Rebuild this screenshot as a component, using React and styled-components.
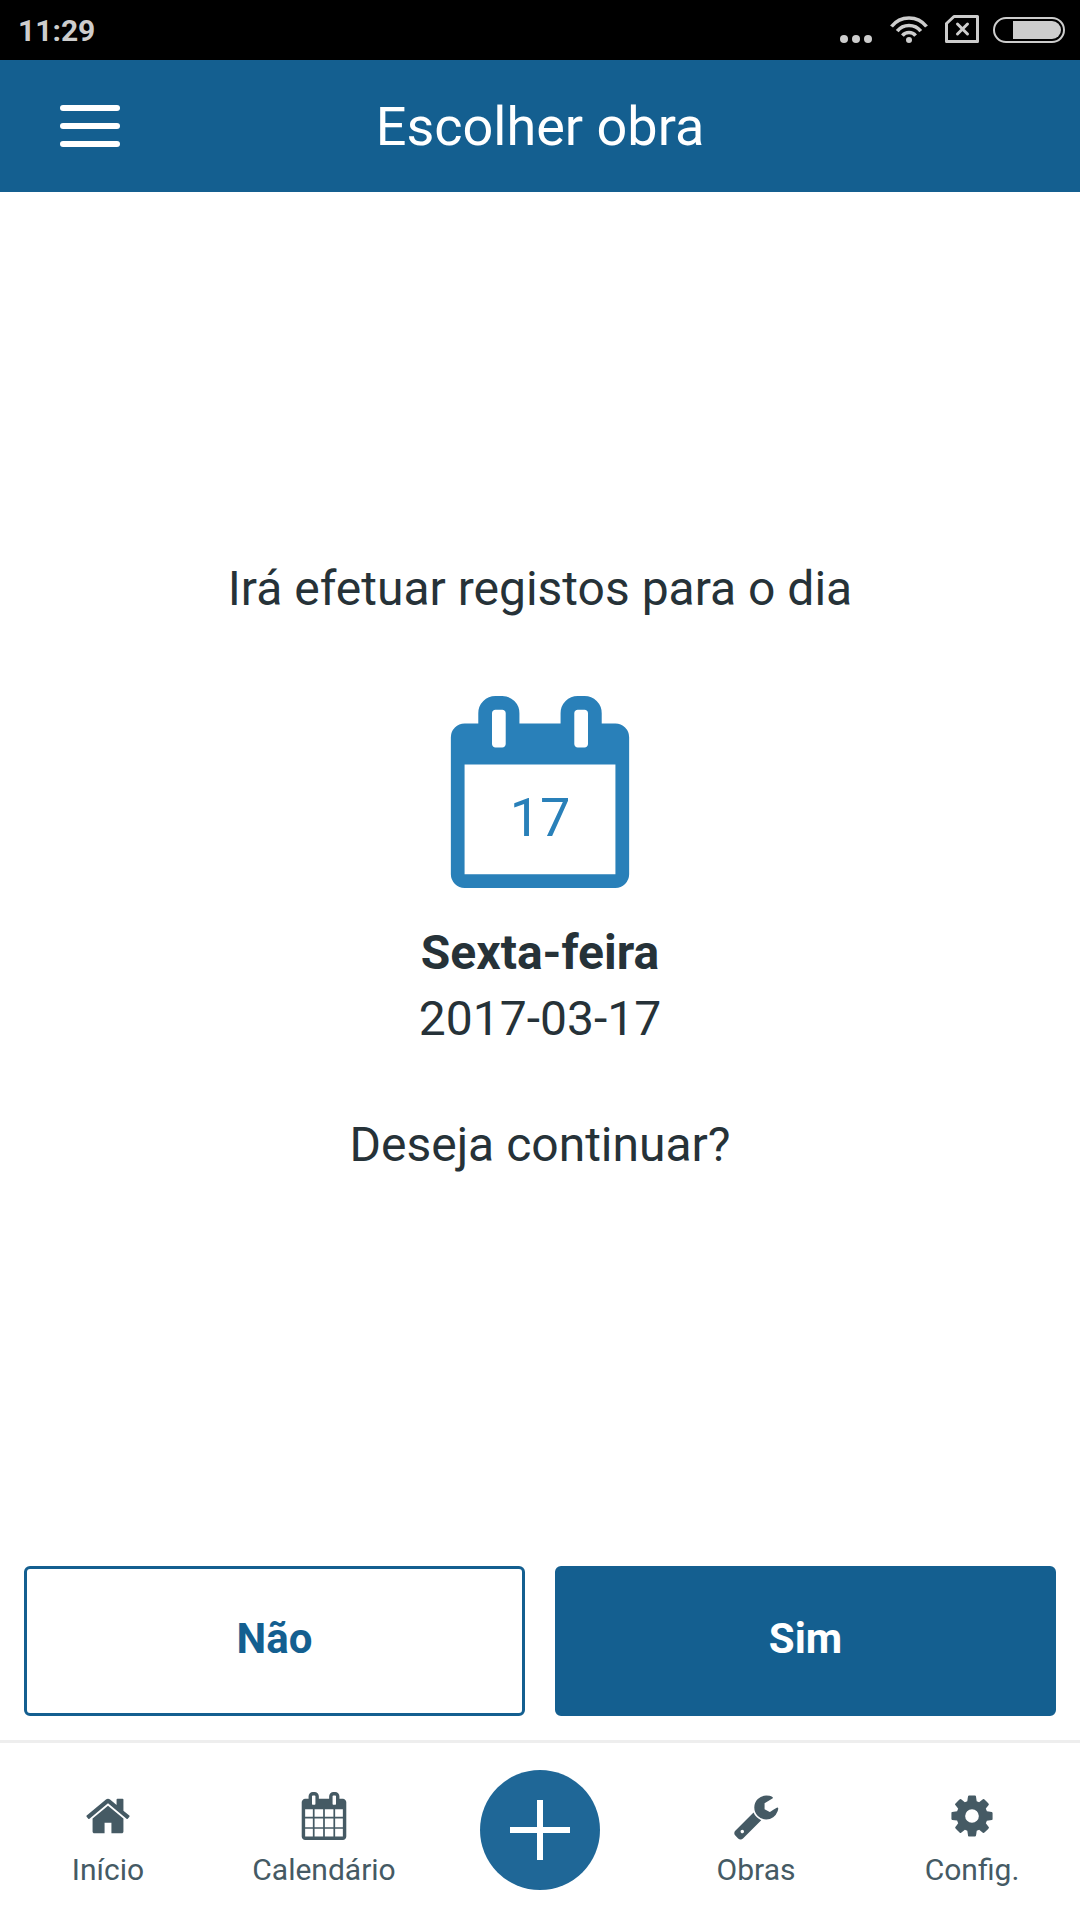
import React from 'react'
import styled, { createGlobalStyle } from 'styled-components'

const colors = {
  primary: '#145f90',
  primaryLight: '#1f6797',
  accent: '#2980b9',
  text: '#263238',
  muted: '#455a64',
  border: '#eeeeee',
  status: '#cdcdcd',
}

const GlobalStyle = createGlobalStyle`
  * {
    box-sizing: border-box;
  }

  body {
    margin: 0;
    background: #fff;
    color: ${ colors.text };
    font-family: Roboto, sans-serif;
  }

  button {
    font-family: inherit;
    cursor: pointer;
  }

  svg {
    display: block;
  }
`

const Screen = styled.div`
  display: flex;
  flex-direction: column;
  min-height: 100vh;
`

const StatusBar = styled.div`
  display: flex;
  align-items: center;
  justify-content: space-between;
  height: 60px;
  padding: 0 15px 0 18px;
  background: #000;
  color: ${ colors.status };
  font-size: 30px;
  font-weight: 700;
`

const StatusIcons = styled.div`
  display: flex;
  gap: 14px;
`

const Header = styled.header`
  display: grid;
  grid-template-columns: 1fr auto 1fr;
  align-items: center;
  height: 132px;
  padding: 0 60px;
  background: ${ colors.primary };
  color: #fff;
`

const MenuButton = styled.button`
  display: flex;
  flex-direction: column;
  gap: 12px;
  width: 60px;
  padding: 0;
  border: 0;
  background: none;
`

const MenuBar = styled.span`
  height: 6px;
  border-radius: 3px;
  background: #fff;
`

const Title = styled.h1`
  margin: 0;
  font-size: 54px;
  font-weight: 400;
`

const Main = styled.main`
  display: flex;
  flex: 1;
  flex-direction: column;
  align-items: center;
  justify-content: center;
  font-size: 48px;
  line-height: 66px;
  text-align: center;
`

const Message = styled.p`
  margin: 0;
`

const DateBlock = styled.div`
  display: flex;
  flex-direction: column;
  align-items: center;
  margin: 74px 0 60px;
`

const CalendarDay = styled.div`
  position: relative;
  margin-bottom: 32px;
  color: ${ colors.accent };
`

const DayNumber = styled.span`
  position: absolute;
  inset: 0;
  display: flex;
  align-items: center;
  justify-content: center;
  padding-top: 52px;
  font-size: 54px;
`

const Actions = styled.div`
  display: flex;
  gap: 30px;
  padding: 24px;
`

const ActionButton = styled.button`
  flex: 1;
  height: 150px;
  padding: 0 0 6px;
  border: 3px solid ${ colors.primary };
  border-radius: 6px;
  background: ${ props => props.$primary ? colors.primary : '#fff' };
  color: ${ props => props.$primary ? '#fff' : colors.primary };
  font-size: 42px;
  font-weight: 700;
`

const TabBar = styled.nav`
  display: grid;
  grid-template-columns: repeat(5, 1fr);
  align-items: end;
  justify-items: center;
  padding: 27px 0 30px;
  border-top: 3px solid ${ colors.border };
`

const TabButton = styled.button`
  display: flex;
  flex-direction: column;
  align-items: center;
  gap: 10px;
  padding: 0;
  border: 0;
  background: none;
  color: ${ colors.muted };
  font-size: 30px;
  line-height: 40px;
`

const AddButton = styled.button`
  display: flex;
  align-items: center;
  justify-content: center;
  width: 120px;
  height: 120px;
  padding: 0;
  border: 0;
  border-radius: 50%;
  background: ${ colors.primaryLight };
  color: #fff;
`

const icons = {
  home: 'M1472 992v480q0 26-19 45t-45 19h-384v-384h-256v384h-384q-26 0-45-19t-19-45v-480q0-1 .5-3t.5-3l575-474 575 474q1 2 1 6zm223-69l-62 74q-8 9-21 11h-3q-13 0-21-7l-692-577-692 577q-12 8-24 7-13-2-21-11l-62-74q-8-10-7-23.5t11-21.5l719-599q32-26 76-26t76 26l244 204v-195q0-14 9-23t23-9h192q14 0 23 9t9 23v408l219 182q10 8 11 21.5t-7 23.5z',
  calendar: 'M192 1664h288v-288h-288v288zm352 0h320v-288h-320v288zm-352-352h288v-320h-288v320zm352 0h320v-320h-320v320zm-352-384h288v-288h-288v288zm736 736h320v-288h-320v288zm-384-736h320v-288h-320v288zm768 736h288v-288h-288v288zm-384-352h320v-320h-320v320zm-352-864v-288q0-13-9.5-22.5t-22.5-9.5h-64q-13 0-22.5 9.5t-9.5 22.5v288q0 13 9.5 22.5t22.5 9.5h64q13 0 22.5-9.5t9.5-22.5zm736 864h288v-320h-288v320zm-384-384h320v-288h-320v288zm384 0h288v-288h-288v288zm32-480v-288q0-13-9.5-22.5t-22.5-9.5h-64q-13 0-22.5 9.5t-9.5 22.5v288q0 13 9.5 22.5t22.5 9.5h64q13 0 22.5-9.5t9.5-22.5zm384-64v1280q0 52-38 90t-90 38h-1408q-52 0-90-38t-38-90v-1280q0-52 38-90t90-38h128v-96q0-66 47-113t113-47h64q66 0 113 47t47 113v96h384v-96q0-66 47-113t113-47h64q66 0 113 47t47 113v96h128q52 0 90 38t38 90z',
  calendarBlank: 'M192 1664h1408v-1024h-1408v1024zm384-1216v-288q0-13-9.5-22.5t-22.5-9.5h-64q-13 0-22.5 9.5t-9.5 22.5v288q0 13 9.5 22.5t22.5 9.5h64q13 0 22.5-9.5t9.5-22.5zm768 0v-288q0-13-9.5-22.5t-22.5-9.5h-64q-13 0-22.5 9.5t-9.5 22.5v288q0 13 9.5 22.5t22.5 9.5h64q13 0 22.5-9.5t9.5-22.5zm384-64v1280q0 52-38 90t-90 38h-1408q-52 0-90-38t-38-90v-1280q0-52 38-90t90-38h128v-96q0-66 47-113t113-47h64q66 0 113 47t47 113v96h384v-96q0-66 47-113t113-47h64q66 0 113 47t47 113v96h128q52 0 90 38t38 90z',
  wrench: 'M448 1472q0-26-19-45t-45-19-45 19-19 45 19 45 45 19 45-19 19-45zm644-420l-682 682q-37 37-90 37-52 0-91-37l-106-108q-38-36-38-90 0-53 38-91l681-681q39 98 114.5 173.5t173.5 114.5zm634-435q0 39-23 106-47 134-164.5 217.5t-258.5 83.5q-185 0-316.5-131.5t-131.5-316.5 131.5-316.5 316.5-131.5q58 0 121.5 16.5t107.5 46.5q16 11 16 28t-16 28l-293 169v224l193 107q5-3 79-48.5t135.5-81 70.5-35.5q15 0 23.5 10t8.5 25z',
  cog: 'M1152 896q0-106-75-181t-181-75-181 75-75 181 75 181 181 75 181-75 75-181zm512-109v222q0 12-8 23t-20 13l-185 28q-19 54-39 91 35 50 107 138 10 12 10 25t-9 23q-27 37-99 108t-94 71q-12 0-26-9l-138-108q-44 23-91 38-16 136-29 186-7 28-36 28h-222q-14 0-24.5-8.5t-11.5-21.5l-28-184q-49-16-90-37l-141 107q-10 9-25 9-14 0-25-11-126-114-165-168-7-10-7-23 0-12 8-23 15-21 51-66.5t54-70.5q-27-50-41-99l-183-27q-13-2-21-12.5t-8-23.5v-222q0-12 8-23t19-13l186-28q14-46 39-92-40-57-107-138-10-12-10-24 0-10 9-23 26-36 98.5-107.5t94.5-71.5q13 0 26 10l138 107q44-23 91-38 16-136 29-186 7-28 36-28h222q14 0 24.5 8.5t11.5 21.5l28 184q49 16 90 37l142-107q9-9 24-9 13 0 25 10 129 119 165 170 7 8 7 22 0 12-8 23-15 21-51 66.5t-54 70.5q26 50 41 98l183 28q13 2 21 12.5t8 23.5z',
}

const Icon = ({ name, size = 48 }) => (
  <svg width={size} height={size} viewBox="0 0 1792 1792" fill="currentColor" aria-hidden="true">
    <path fillRule="evenodd" d={icons[name]} />
  </svg>
)

const Tab = ({ icon, label }) => (
  <TabButton type="button">
    <Icon name={icon} />
    { label }
  </TabButton>
)

const PhoneStatus = () => (
  <StatusBar>
    <span>11:29</span>
    <StatusIcons>
      <svg width="36" height="30" fill="currentColor">
        <circle cx="7" cy="24" r="4" />
        <circle cx="19" cy="24" r="4" />
        <circle cx="31" cy="24" r="4" />
      </svg>
      <svg width="44" height="30" fill="none" stroke="currentColor" strokeWidth="3.6">
        <path d="M4.5 11.5a22.2 22.2 0 0 1 35 0M10.2 16.2a15 15 0 0 1 23.6 0M15.4 20.6a8.6 8.6 0 0 1 13.2 0" />
        <circle cx="22" cy="25" r="3" fill="currentColor" stroke="none" />
      </svg>
      <svg width="34" height="30" fill="none" stroke="currentColor" strokeWidth="3">
        <path d="M9 1.5H32.5V26.5H1.5V8.5Z" strokeLinejoin="round" />
        <path d="M12.5 9L22.5 19M22.5 9L12.5 19" strokeLinecap="round" />
      </svg>
      <svg width="72" height="30" fill="none">
        <rect x="1" y="3" width="70" height="24" rx="12" stroke="currentColor" strokeWidth="2" />
        <path d="M20 6H59a9 9 0 0 1 0 18H20Z" fill="currentColor" />
      </svg>
    </StatusIcons>
  </StatusBar>
)

export default () => (
  <>
    <GlobalStyle />
    <Screen>
      <PhoneStatus />
      <Header>
        <MenuButton type="button" aria-label="Menu">
          <MenuBar />
          <MenuBar />
          <MenuBar />
        </MenuButton>
        <Title>Escolher obra</Title>
      </Header>
      <Main>
        <Message>Irá efetuar registos para o dia</Message>
        <DateBlock>
          <CalendarDay>
            <Icon name="calendarBlank" size={192} />
            <DayNumber>17</DayNumber>
          </CalendarDay>
          <strong>Sexta-feira</strong>
          <time dateTime="2017-03-17">2017-03-17</time>
        </DateBlock>
        <Message>Deseja continuar?</Message>
      </Main>
      <Actions>
        <ActionButton type="button">Não</ActionButton>
        <ActionButton type="button" $primary>Sim</ActionButton>
      </Actions>
      <TabBar>
        <Tab icon="home" label="Início" />
        <Tab icon="calendar" label="Calendário" />
        <AddButton type="button" aria-label="Adicionar">
          <svg width="60" height="60" stroke="currentColor" strokeWidth="6">
            <path d="M30 0V60M0 30H60" />
          </svg>
        </AddButton>
        <Tab icon="wrench" label="Obras" />
        <Tab icon="cog" label="Config." />
      </TabBar>
    </Screen>
  </>
)
